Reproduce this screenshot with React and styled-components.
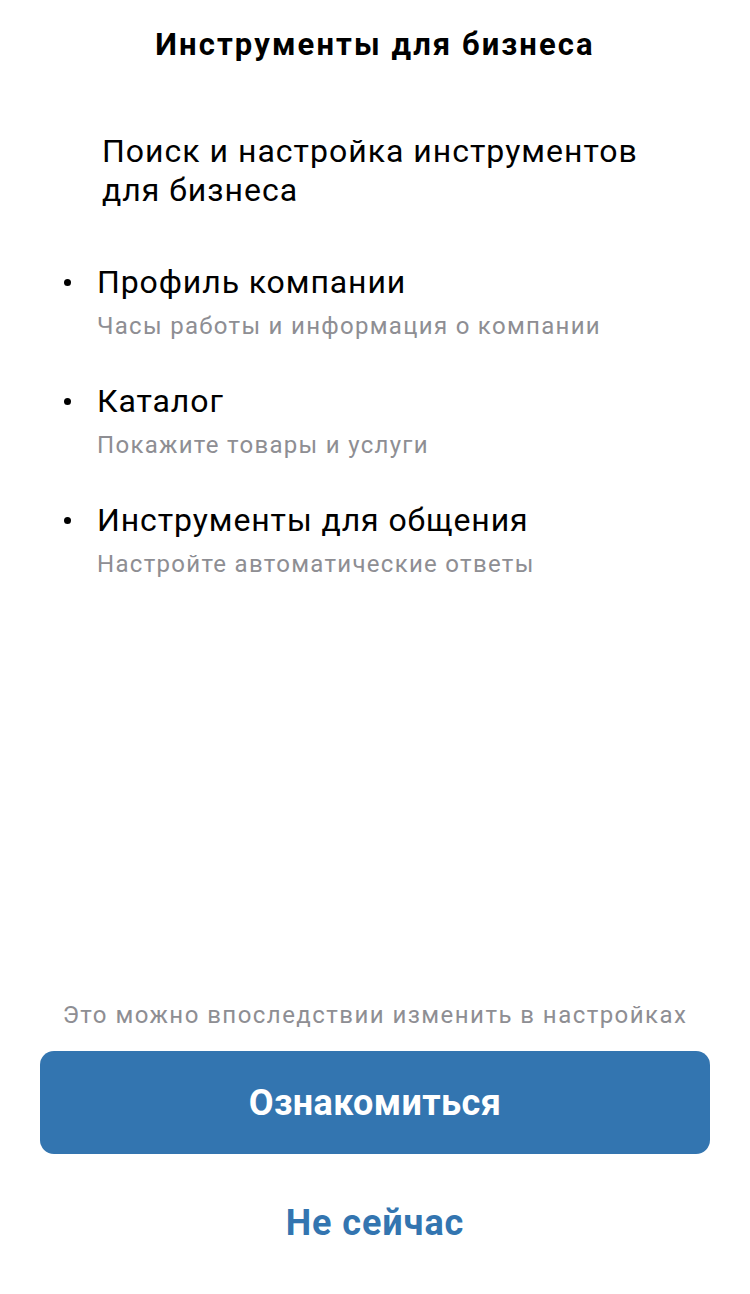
import React from "react";
import styled, { createGlobalStyle } from "styled-components";

const GlobalStyle = createGlobalStyle`
  html, body {
    margin: 0;
    padding: 0;
    background: #ffffff;
  }
  body {
    font-family: Roboto, "Noto Sans", "Liberation Sans", sans-serif;
    -webkit-font-smoothing: antialiased;
  }
`;

const Page = styled.div`
  box-sizing: border-box;
  width: 750px;
  height: 1294px;
  display: flex;
  flex-direction: column;
  padding: 0 40px;
`;

const Title = styled.h1`
  margin: 24px 0 0;
  text-align: center;
  font-size: 31px;
  line-height: 42px;
  font-weight: 700;
  letter-spacing: 2.1px;
  color: #000000;
`;

const Lead = styled.p`
  margin: 66px 0 0 62px;
  font-size: 32px;
  line-height: 39px;
  font-weight: 400;
  letter-spacing: 1px;
  color: #000000;
`;

const List = styled.ul`
  list-style: none;
  margin: 52px 0 0;
  padding: 0;
  display: flex;
  flex-direction: column;
  gap: 40px;
`;

const Item = styled.li`
  display: grid;
  grid-template-columns: 57px 1fr;
  align-items: baseline;
`;

const Bullet = styled.span`
  justify-self: start;
  margin-left: 24px;
  width: 7px;
  height: 7px;
  border-radius: 50%;
  background: #000000;
  align-self: center;
`;

const ItemTitle = styled.div`
  font-size: 32px;
  line-height: 40px;
  letter-spacing: 0.9px;
  color: #000000;
`;

const ItemText = styled.div`
  grid-column: 2;
  margin-top: 9px;
  font-size: 24px;
  line-height: 30px;
  letter-spacing: 1.3px;
  color: #8e8e93;
`;

const Spacer = styled.div`
  flex: 1;
`;

const Note = styled.p`
  margin: 0;
  text-align: center;
  font-size: 24px;
  line-height: 30px;
  letter-spacing: 1.45px;
  color: #8e8e93;
`;

const PrimaryButton = styled.button`
  margin-top: 21px;
  height: 103px;
  border: none;
  border-radius: 14px;
  background: #3375b0;
  color: #ffffff;
  font-family: inherit;
  font-size: 36px;
  font-weight: 700;
  letter-spacing: 0.4px;
`;

const LinkButton = styled.button`
  margin: 29px 0 31px;
  height: 80px;
  border: none;
  background: transparent;
  color: #3375b0;
  font-family: inherit;
  font-size: 36px;
  font-weight: 700;
  letter-spacing: 0.9px;
`;

const items = [
  { title: "Профиль компании", text: "Часы работы и информация о компании" },
  { title: "Каталог", text: "Покажите товары и услуги" },
  { title: "Инструменты для общения", text: "Настройте автоматические ответы" },
];

export default function App() {
  return (
    <>
      <GlobalStyle />
      <Page>
        <Title>Инструменты для бизнеса</Title>
        <Lead>
          Поиск и настройка инструментов
          <br />
          для бизнеса
        </Lead>
        <List>
          {items.map((item) => (
            <Item key={item.title}>
              <Bullet />
              <ItemTitle>{item.title}</ItemTitle>
              <ItemText>{item.text}</ItemText>
            </Item>
          ))}
        </List>
        <Spacer />
        <Note>Это можно впоследствии изменить в настройках</Note>
        <PrimaryButton>Ознакомиться</PrimaryButton>
        <LinkButton>Не сейчас</LinkButton>
      </Page>
    </>
  );
}
